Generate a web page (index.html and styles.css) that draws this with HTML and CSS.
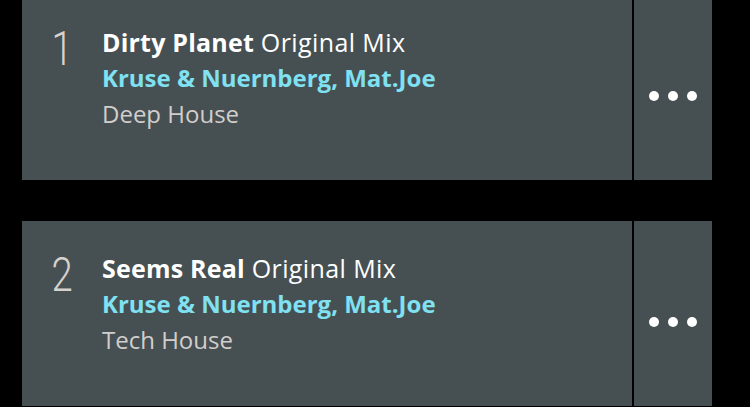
FILE: index.html
```html
<!DOCTYPE html>
<html>
<head>
  <meta charset="UTF-8">
  <meta name="viewport" content="width=device-width, initial-scale=1.0">
  <title>Tracks</title>
  <link rel="stylesheet" href="styles.css">
</head>
<body>
  <ul class="track-list">
    <li class="track">
      <div class="track-main">
        <span class="track-num">1</span>
        <div class="track-info">
          <div class="track-title"><strong>Dirty Planet</strong> Original Mix</div>
          <div class="track-artists">Kruse &amp; Nuernberg, Mat.Joe</div>
          <div class="track-genre">Deep House</div>
        </div>
      </div>
      <button class="track-menu" aria-label="More">
        <span class="dot"></span><span class="dot"></span><span class="dot"></span>
      </button>
    </li>
    <li class="track">
      <div class="track-main">
        <span class="track-num">2</span>
        <div class="track-info">
          <div class="track-title"><strong>Seems Real</strong> Original Mix</div>
          <div class="track-artists">Kruse &amp; Nuernberg, Mat.Joe</div>
          <div class="track-genre">Tech House</div>
        </div>
      </div>
      <button class="track-menu" aria-label="More">
        <span class="dot"></span><span class="dot"></span><span class="dot"></span>
      </button>
    </li>
  </ul>
</body>
</html>
```

FILE: styles.css
```css
body {
  margin: 0;
  background-color: #000;
  font-family: "Open Sans", "Noto Sans", sans-serif;
  overflow: hidden;
}

.track-list {
  list-style-type: none;
  margin: -5px 0 0 22px;
  padding: 0;
  width: 690px;
  display: flex;
  flex-direction: column;
  gap: 41px;
}

.track {
  display: flex;
  height: 185px;
  background-color: #465053;
}

.track-main {
  flex: 1;
  display: flex;
  padding-top: 29px;
}

.track-num {
  width: 80px;
  text-align: center;
  font-family: Roboto, sans-serif;
  font-weight: 300;
  font-size: 49px;
  line-height: 46px;
  margin-top: 2px;
  color: #d8d2cc;
  transform: scaleX(0.78);
}

.track-info {
  line-height: 36px;
  font-size: 24px;
}

.track-title {
  color: #fff;
  font-size: 25px;
  letter-spacing: 0.4px;
}

.track-title strong {
  font-weight: 700;
  letter-spacing: 0.2px;
}

.track-artists {
  color: #7fe1f2;
  font-weight: 700;
}

.track-genre {
  color: #d2cecb;
}

.track-menu {
  width: 80px;
  border: none;
  border-left: 2px solid #000;
  background-color: #465053;
  display: flex;
  align-items: flex-start;
  justify-content: center;
  gap: 9px;
  padding: 96px 0 0;
}

.dot {
  width: 10px;
  height: 10px;
  border-radius: 50%;
  background-color: #fff;
}
```
